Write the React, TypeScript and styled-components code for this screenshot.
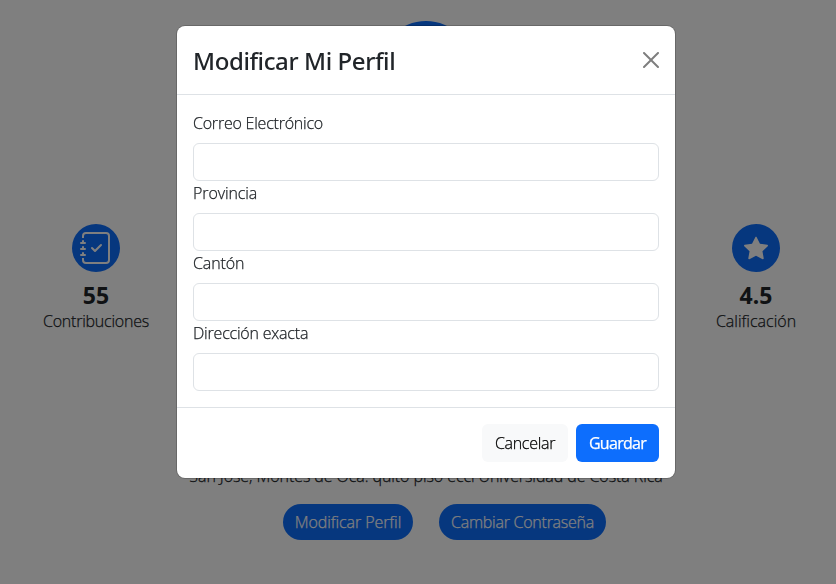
import React from "react";
import styled, { createGlobalStyle } from "styled-components";
import { BsJournalCheck, BsStarFill } from "react-icons/bs";

const GlobalStyle = createGlobalStyle`
  *, *::before, *::after { box-sizing: border-box; }
  body {
    margin: 0;
    overflow: hidden;
    background: #fff;
    color: #212529;
    font-family: "Open Sans", "Noto Sans", sans-serif;
    font-size: 16px;
    font-weight: 300;
    line-height: 24px;
  }
`;

const Page = styled.main`
  width: 852px;
  height: 584px;
  padding-top: 21px;
  display: grid;
  grid-template-columns: 192px 468px 192px;
  grid-template-rows: 203px 251px 1fr;
  justify-items: center;
`;

const Avatar = styled.div`
  grid-column: 2;
  width: 96px;
  height: 96px;
  border-radius: 50%;
  background: #0d6efd;
`;

const Stat = styled.section<{ $column: number }>`
  grid-column: ${(p) => p.$column};
  grid-row: 2;
  display: flex;
  flex-direction: column;
  align-items: center;
`;

const StatIcon = styled.div`
  width: 48px;
  height: 48px;
  border-radius: 50%;
  background: #0d6efd;
  color: #fff;
  display: flex;
  align-items: center;
  justify-content: center;
`;

const StatValue = styled.strong`
  margin-top: 9px;
  font-family: "Noto Sans", sans-serif;
  font-size: 23px;
  font-weight: 700;
  line-height: 29px;
`;

const Text = styled.span<{ $track?: number }>`
  white-space: nowrap;
  letter-spacing: ${(p) => p.$track ?? 0}px;
  -webkit-text-stroke: 0.25px currentColor;
`;

const StatLabel = styled(Text)`
  line-height: 23px;
`;

const Details = styled.section`
  grid-column: 1 / -1;
  grid-row: 3;
  display: flex;
  flex-direction: column;
  align-items: center;
  margin-top: -12px;
`;

const Address = styled.p`
  margin: 0;
  line-height: 26px;
`;

const Actions = styled.div`
  display: flex;
  gap: 26px;
  margin: 15px 0 0 37px;
`;

const PillButton = styled.button<{ $width: number }>`
  width: ${(p) => p.$width}px;
  height: 36px;
  padding: 0;
  border: 0;
  border-radius: 18px;
  background: #0d6efd;
  color: #fff;
  font: inherit;
`;

const Backdrop = styled.div`
  position: fixed;
  inset: 0;
  padding: 26px 0 0 177px;
  background: rgba(0, 0, 0, 0.5);
`;

const Dialog = styled.div`
  width: 498px;
  height: 452px;
  border-radius: 8px;
  background: #fff;
  box-shadow: 0 0 0 1px rgba(0, 0, 0, 0.18);
  display: flex;
  flex-direction: column;
`;

const DialogHeader = styled.header`
  height: 69px;
  padding: 0 16px;
  border-bottom: 1px solid #dee2e6;
  display: flex;
  align-items: center;
  justify-content: space-between;
`;

const DialogTitle = styled.h1`
  margin: 2px 0 0;
  font-family: "Noto Sans", sans-serif;
  font-size: 24px;
  font-weight: 500;
  line-height: 36px;
  letter-spacing: -0.4px;
`;

const CloseButton = styled.button`
  width: 16px;
  height: 16px;
  padding: 0;
  border: 0;
  background: none;
  color: #000;
  opacity: 0.5;
  display: flex;
`;

const Form = styled.form`
  flex: 1;
  padding: 16px;
`;

const Field = styled.label`
  display: flex;
  flex-direction: column;
  align-items: flex-start;
  gap: 8px;
`;

const Input = styled.input`
  width: 100%;
  height: 38px;
  padding: 6px 12px;
  border: 1px solid #dee2e6;
  border-radius: 6px;
  background: #fff;
  font: inherit;
`;

const DialogFooter = styled.footer`
  height: 71px;
  padding: 16px;
  border-top: 1px solid #dee2e6;
  display: flex;
  justify-content: flex-end;
  gap: 8px;
`;

const FooterButton = styled.button<{ $primary?: boolean }>`
  width: ${(p) => (p.$primary ? 83 : 86)}px;
  height: 38px;
  padding: 0;
  border: 0;
  border-radius: 6px;
  background: ${(p) => (p.$primary ? "#0d6efd" : "#f8f9fa")};
  color: ${(p) => (p.$primary ? "#fff" : "#000")};
  font: inherit;
  font-weight: ${(p) => (p.$primary ? 400 : 300)};
`;

const fields = [
  { label: "Correo Electrónico", track: -0.22 },
  { label: "Provincia", track: -0.1 },
  { label: "Cantón", track: -0.12 },
  { label: "Dirección exacta", track: -0.2 },
];

export default function App() {
  return (
    <>
      <GlobalStyle />
      <Page>
        <Avatar />
        <Stat $column={1}>
          <StatIcon><BsJournalCheck size={32} /></StatIcon>
          <StatValue>55</StatValue>
          <StatLabel $track={-0.22}>Contribuciones</StatLabel>
        </Stat>
        <Stat $column={3}>
          <StatIcon><BsStarFill size={24} /></StatIcon>
          <StatValue>4.5</StatValue>
          <StatLabel>Calificación</StatLabel>
        </Stat>
        <Details>
          <Address><Text $track={-0.08}>San José, Montes de Oca. quito piso ecci Universidad de Costa Rica</Text></Address>
          <Actions>
            <PillButton $width={130}><Text $track={-0.08}>Modificar Perfil</Text></PillButton>
            <PillButton $width={167}><Text $track={-0.25}>Cambiar Contraseña</Text></PillButton>
          </Actions>
        </Details>
      </Page>
      <Backdrop>
        <Dialog role="dialog" aria-modal="true">
          <DialogHeader>
            <DialogTitle>Modificar Mi Perfil</DialogTitle>
            <CloseButton aria-label="Cerrar">
              <svg width="16" height="16" viewBox="0 0 16 16" fill="currentColor">
                <path d="M.293.293a1 1 0 0 1 1.414 0L8 6.586 14.293.293a1 1 0 1 1 1.414 1.414L9.414 8l6.293 6.293a1 1 0 0 1-1.414 1.414L8 9.414l-6.293 6.293a1 1 0 0 1-1.414-1.414L6.586 8 .293 1.707a1 1 0 0 1 0-1.414z" />
              </svg>
            </CloseButton>
          </DialogHeader>
          <Form>
            {fields.map((f) => (
              <Field key={f.label}>
                <Text $track={f.track}>{f.label}</Text>
                <Input />
              </Field>
            ))}
          </Form>
          <DialogFooter>
            <FooterButton><Text $track={-0.3}>Cancelar</Text></FooterButton>
            <FooterButton $primary><Text $track={-0.7}>Guardar</Text></FooterButton>
          </DialogFooter>
        </Dialog>
      </Backdrop>
    </>
  );
}
